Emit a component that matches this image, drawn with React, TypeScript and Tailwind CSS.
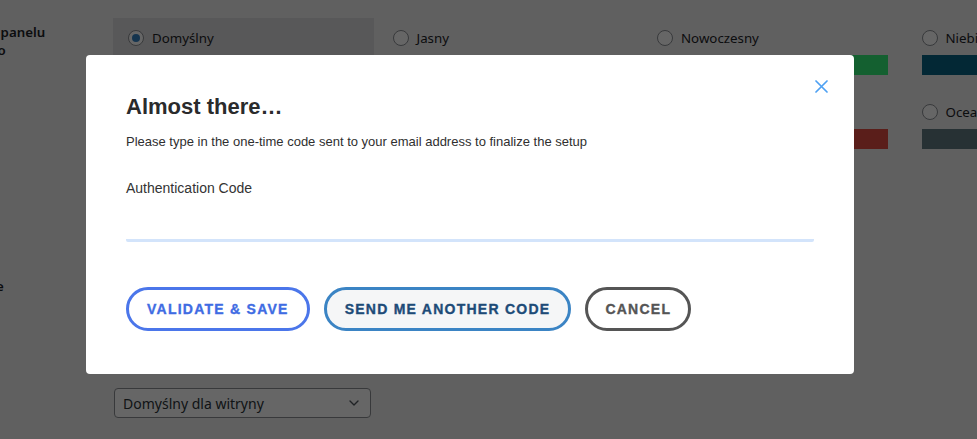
import React from "react";
import { ChevronDown } from "lucide-react";

type Scheme = { name: string; colors: string[]; checked?: boolean };

const schemes: Scheme[] = [
  { name: "Domyślny", colors: ["#1d2327", "#2c3338", "#2271b1", "#72aee6"], checked: true },
  { name: "Jasny", colors: ["#e5e5e5", "#999999", "#d64e07", "#04a4cc"] },
  { name: "Nowoczesny", colors: ["#1e1e1e", "#3858e9", "#33f078"] },
  { name: "Niebieski", colors: ["#096484", "#4796b3", "#52accc", "#74b6ce"] },
  { name: "Kawa", colors: ["#46403c", "#59524c", "#c7a589", "#9ea476"] },
  { name: "Ektoplazma", colors: ["#413256", "#523f6d", "#a3b745", "#d46f15"] },
  { name: "Północ", colors: ["#25282b", "#363b3f", "#69a8bb", "#e14d43"] },
  { name: "Ocean", colors: ["#627c83", "#738e96", "#9ebaa0", "#aa9d88"] },
  { name: "Wschód słońca", colors: ["#b43c38", "#cf4944", "#dd823b", "#ccaf0b"] },
];

function Radio({ checked }: { checked?: boolean }) {
  return (
    <span className="w-[16px] h-[16px] rounded-full border border-[#8c8f94] bg-white flex items-center justify-center shrink-0">
      {checked && <span className="w-[8px] h-[8px] rounded-full bg-[#3582c4]" />}
    </span>
  );
}

function ColorOption({ s }: { s: Scheme }) {
  return (
    <div
      className={`w-[261px] h-[72px] pt-[5px] px-[15px] pb-[15px] flex flex-col ${
        s.checked ? "bg-[#dcdcde]" : ""
      }`}
    >
      <div className="h-[30px] flex items-center">
        <Radio checked={s.checked} />
        <span className="ml-[8px] leading-[20px]">{s.name}</span>
      </div>
      <div className="mt-[2px] h-[20px] flex">
        {s.colors.map((c, i) => (
          <div key={i} className="flex-1 h-full" style={{ backgroundColor: c }} />
        ))}
      </div>
    </div>
  );
}

function Checkbox() {
  return <span className="w-[16px] h-[16px] rounded-[4px] border border-[#8c8f94] bg-white shrink-0" />;
}

export default function App() {
  return (
    <div className="relative w-[977px] h-[439px] overflow-hidden bg-[#f0f0f1] font-['Noto_Sans',sans-serif] text-[13.3px] text-[#1d2327]">
      {/* Background WordPress profile page */}
      <div className="-ml-[115px] pt-[3px] flex flex-col">
        <div className="flex">
          <div className="w-[218px] shrink-0 pt-[20px] pr-[10px] font-semibold leading-[18px]">
            Schemat kolorów panelu administracyjnego
          </div>
          <div className="w-[1070px] shrink-0 pl-[10px] pt-[15px] pb-[15px]">
            <div className="w-[1056px] flex flex-wrap gap-x-[3.5px] gap-y-[2px]">
              {schemes.map((s) => (
                <ColorOption key={s.name} s={s} />
              ))}
            </div>
          </div>
        </div>
        <div className="flex h-[60px]">
          <div className="w-[218px] shrink-0 pt-[24px] pr-[10px] font-semibold leading-[18px]">Skróty klawiszowe</div>
          <div className="pl-[10px] pt-[20px] flex items-start gap-[6px]">
            <Checkbox />
            <span className="leading-[18px]">Włącz skróty klawiszowe do moderacji komentarzy.</span>
          </div>
        </div>
        <div className="flex h-[60px]">
          <div className="w-[218px] shrink-0 pt-[20px] pr-[10px] font-semibold leading-[18px]">Pasek narzędzi</div>
          <div className="pl-[10px] pt-[20px] flex items-start gap-[6px]">
            <Checkbox />
            <span className="leading-[18px]">Pokazuj pasek narzędzi podczas przeglądania witryny</span>
          </div>
        </div>
        <div className="flex">
          <div className="w-[218px] shrink-0 pt-[20px] pr-[10px] font-semibold leading-[18px]">Język</div>
          <div className="pl-[11px] pt-[15px]">
            <div className="w-[257px] h-[30px] border border-[#8c8f94] rounded-[4px] bg-white pl-[8px] pr-[8px] flex items-center justify-between text-[14px] text-[#2c3338]">
              <span>Domyślny dla witryny</span>
              <ChevronDown size={16} strokeWidth={2} color="#50575e" />
            </div>
          </div>
        </div>
      </div>

      {/* Overlay */}
      <div className="absolute inset-0 bg-black/60" />

      {/* Modal */}
      <div className="absolute left-[86px] top-[55px] w-[768px] h-[319px] bg-white rounded-[4px] px-[40px] pt-[39px] font-['Liberation_Sans',Arial,sans-serif] flex flex-col">
        <button className="absolute left-[729px] top-[25px] w-[13px] h-[13px]" aria-label="Close">
          <svg viewBox="0 0 13 13" width="13" height="13">
            <path d="M1 1 L12 12 M12 1 L1 12" stroke="#4ea1f3" strokeWidth="1.7" strokeLinecap="round" />
          </svg>
        </button>
        <h2 className="text-[22px] leading-[26px] font-bold text-[#2a2b2c]">Almost there…</h2>
        <p className="mt-[13px] text-[13px] leading-[18px] text-[#2f2f2f]">
          Please type in the one-time code sent to your email address to finalize the setup
        </p>
        <label className="mt-[27px] text-[14px] leading-[20px] text-[#333333]">Authentication Code</label>
        <input
          type="text"
          className="w-full h-[44px] border-0 border-b-[3px] border-[#d3e4fb] rounded-b-[2px] outline-none bg-white"
        />
        <div className="mt-[45px] flex gap-[14px]">
          <button className="h-[44px] px-[18px] rounded-full border-[3px] border-[#4b76ea] bg-white text-[#3f6ce3] text-[14px] font-bold tracking-[1.25px] [-webkit-text-stroke:0.35px_currentColor]">
            VALIDATE &amp; SAVE
          </button>
          <button className="h-[44px] px-[18px] rounded-full border-[3px] border-[#3b84c4] bg-[#f5f6f7] text-[#1d4b78] text-[14px] font-bold tracking-[1.25px] [-webkit-text-stroke:0.35px_currentColor]">
            SEND ME ANOTHER CODE
          </button>
          <button className="h-[44px] px-[17px] rounded-full border-[3px] border-[#555555] bg-white text-[#555555] text-[14px] font-bold tracking-[1.25px] [-webkit-text-stroke:0.35px_currentColor]">
            CANCEL
          </button>
        </div>
      </div>
    </div>
  );
}
